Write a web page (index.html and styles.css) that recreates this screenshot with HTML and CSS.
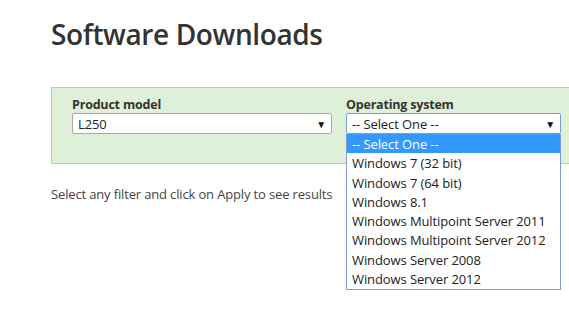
FILE: index.html
```html
<!DOCTYPE html>
<html lang="en">
<head>
  <meta charset="UTF-8">
  <title>Software Downloads</title>
  <link rel="stylesheet" href="styles.css">
</head>
<body>
  <div class="page">
    <h1>Software Downloads</h1>

    <div class="filters">
      <div class="field field-model">
        <label>Product model</label>
        <div class="select">
          <span>L250</span>
          <span class="arrow">&#9660;</span>
        </div>
      </div>

      <div class="field field-os">
        <label>Operating system</label>
        <div class="select open">
          <span>-- Select One --</span>
          <span class="arrow">&#9660;</span>
        </div>
        <ul class="options">
          <li class="selected">-- Select One --</li>
          <li>Windows 7 (32 bit)</li>
          <li>Windows 7 (64 bit)</li>
          <li>Windows 8.1</li>
          <li>Windows Multipoint Server 2011</li>
          <li>Windows Multipoint Server 2012</li>
          <li>Windows Server 2008</li>
          <li>Windows Server 2012</li>
        </ul>
      </div>
    </div>

    <p class="hint">Select any filter and click on Apply to see results</p>
  </div>
</body>
</html>
```

FILE: styles.css
```css
* {
  margin: 0;
  padding: 0;
  box-sizing: border-box;
}

html, body {
  height: 100%;
}

body {
  font-family: 'Open Sans', 'Noto Sans', sans-serif;
  background: #fff;
  color: #333;
  overflow: hidden;
}

.page {
  padding: 14px 0 0 51px;
  min-height: 100%;
}

h1 {
  font-size: 28px;
  font-weight: 600;
  color: #333;
  letter-spacing: -0.4px;
  line-height: 40px;
}

/* panel runs off the right edge of the page */
.filters {
  display: flex;
  gap: 14px;
  margin-top: 33px;
  height: 77px;
  padding: 8px 20px;
  background: #dff0d8;
  border: 1px solid #b9cdb1;
  border-right: none;
}

.field {
  position: relative;
  display: flex;
  flex-direction: column;
}

.field label {
  font-size: 12.5px;
  font-weight: 700;
  color: #333;
  line-height: 17px;
  letter-spacing: -0.2px;
}

.field-model .select {
  width: 260px;
}

.field-os .select {
  width: 215px;
}

.select {
  display: flex;
  align-items: center;
  justify-content: space-between;
  height: 21px;
  padding: 0 5px;
  background: #fff;
  border: 1px solid #a9a9a9;
  border-radius: 2px;
  font-size: 13px;
  color: #222;
  letter-spacing: -0.1px;
}

.select.open {
  border-color: #7a9cd3;
}

.select .arrow {
  font-size: 10px;
  color: #111;
}

.options {
  position: absolute;
  top: 38px;
  left: 0;
  width: 215px;
  list-style: none;
  background: #fff;
  border: 1px solid #7a9cd3;
  border-top: none;
  padding-bottom: 1px;
}

.options li {
  height: 19.3px;
  line-height: 20px;
  padding-left: 5px;
  font-size: 13px;
  color: #222;
  letter-spacing: -0.1px;
  white-space: nowrap;
}

.options li.selected {
  background: #3399ff;
  color: #fff;
}

.hint {
  margin-top: 21px;
  font-size: 13px;
  color: #444;
  letter-spacing: -0.15px;
}
```
